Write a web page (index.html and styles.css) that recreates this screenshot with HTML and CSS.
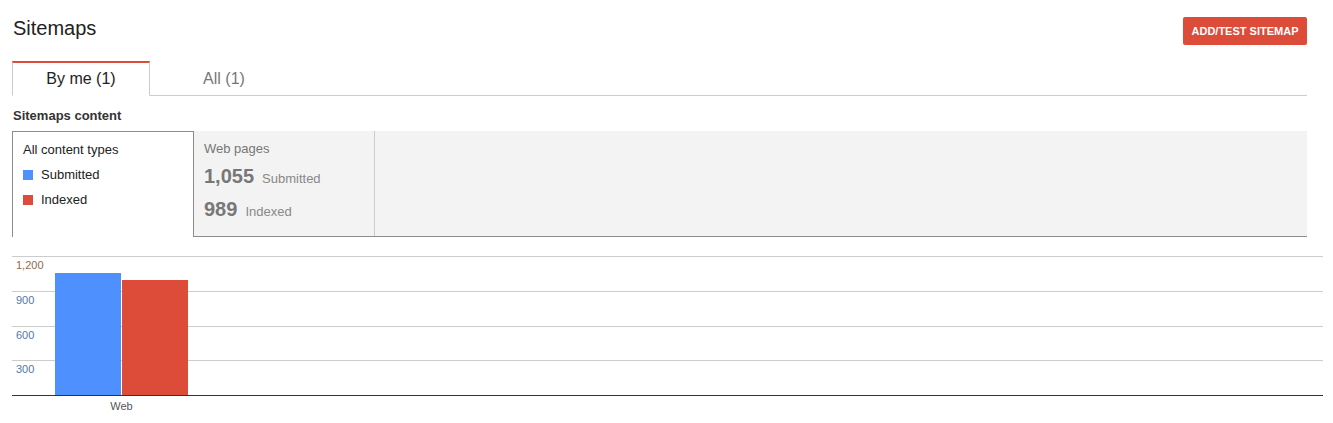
FILE: index.html
```html
<!DOCTYPE html>
<html>
<head>
    <title>Sitemaps</title>
    <link rel="stylesheet" href="styles.css">
</head>
<body>
    <div class="page">
        <div class="header">
            <div class="main-title">Sitemaps</div>
            <button class="add-sitemap">ADD/TEST SITEMAP</button>
        </div>

        <div class="tabs">
            <div class="tab active">By me (1)</div>
            <div class="tab tab-wide">All (1)</div>
        </div>

        <h2 class="section-title">Sitemaps content</h2>
        <div class="content-box">
            <div class="type-list">
                <div class="type-row">All content types</div>
                <div class="type-row"><span class="swatch submitted"></span>Submitted</div>
                <div class="type-row"><span class="swatch indexed"></span>Indexed</div>
            </div>
            <div class="type-details">
                <div class="detail-cell">
                    <div class="detail-title">Web pages</div>
                    <div class="detail-row"><span class="detail-num">1,055</span><span class="detail-label">Submitted</span></div>
                    <div class="detail-row"><span class="detail-num">989</span><span class="detail-label">Indexed</span></div>
                </div>
            </div>
        </div>

        <div class="chart">
            <div class="plot">
                <div class="grid-lines">
                    <div class="band"><span class="tick tick-top">1,200</span></div>
                    <div class="band"><span class="tick">900</span></div>
                    <div class="band"><span class="tick">600</span></div>
                    <div class="band"><span class="tick">300</span></div>
                </div>
                <div class="bars">
                    <div class="bar-group">
                        <div class="bar submitted" style="height: 87.9%"></div>
                        <div class="bar indexed" style="height: 82.4%"></div>
                    </div>
                </div>
            </div>
            <div class="x-axis">
                <div class="x-label">Web</div>
            </div>
        </div>
    </div>
</body>
</html>
```

FILE: styles.css
```css
body {
    font-family: "Liberation Sans", Arial, sans-serif;
    background-color: #fff;
    margin: 0;
    padding: 0;
    color: #222;
}
.page {
    padding: 0 26px 0 12px;
}
.header {
    display: flex;
    justify-content: space-between;
    align-items: flex-start;
    padding-top: 16px;
}
.main-title {
    font-size: 20px;
    line-height: 24px;
    color: #222;
    padding-left: 1px;
}
.add-sitemap {
    margin-top: 1px;
    width: 124px;
    height: 28px;
    background-color: #dd4b39;
    color: white;
    border: none;
    border-radius: 2px;
    font-family: inherit;
    font-size: 11px;
    font-weight: bold;
    padding: 0;
    cursor: pointer;
}
.tabs {
    display: flex;
    margin-top: 16px;
    height: 34px;
    border-bottom: 1px solid #ccc;
}
.tab {
    box-sizing: border-box;
    width: 138px;
    height: 35px;
    border: 1px solid transparent;
    border-top: 2px solid transparent;
    text-align: center;
    font-size: 16px;
    line-height: 32px;
    color: #777;
}
.tab-wide {
    width: 148px;
}
.tab.active {
    border-color: #ccc;
    border-top-color: #dd4b39;
    border-bottom-color: #fff;
    background-color: #fff;
    color: #222;
}
.section-title {
    font-size: 13px;
    line-height: 16px;
    font-weight: bold;
    color: #333;
    margin: 12px 0 7px 1px;
}
.content-box {
    display: flex;
    height: 106px;
}
.type-list {
    box-sizing: border-box;
    width: 182px;
    border: 1px solid #8c8c8c;
    border-bottom: none;
    padding: 5px 10px;
    font-size: 13px;
}
.type-row {
    display: flex;
    align-items: center;
    line-height: 25px;
}
.swatch {
    width: 10px;
    height: 10px;
    margin-right: 8px;
}
.submitted {
    background-color: #4d90fe;
}
.indexed {
    background-color: #dd4b39;
}
.type-details {
    flex: 1;
    display: flex;
    background-color: #f3f3f3;
    border-bottom: 1px solid #8c8c8c;
}
.detail-cell {
    box-sizing: border-box;
    width: 181px;
    border-right: 1px solid #ccc;
    padding: 6px 10px 5px;
}
.detail-title {
    font-size: 13px;
    line-height: 23px;
    color: #777;
}
.detail-row {
    line-height: 33px;
    height: 33px;
}
.detail-num {
    font-size: 20px;
    font-weight: bold;
    color: #777;
    margin-right: 8px;
}
.detail-label {
    font-size: 13px;
    color: #888;
}
.chart {
    margin: 19px -16px 0 0;
}
.plot {
    display: grid;
    height: 139px;
    border-bottom: 1px solid #333;
}
.grid-lines,
.bars {
    grid-area: 1 / 1;
}
.grid-lines {
    display: flex;
    flex-direction: column;
}
.band {
    flex: 1;
    border-top: 1px solid #ccc;
    padding: 2px 0 0 4px;
}
.tick {
    display: block;
    font-size: 11px;
    line-height: 13px;
    color: #55779f;
}
.tick-top {
    color: #8f6a4c;
}
.bars {
    display: flex;
    align-items: flex-end;
    padding-left: 43px;
}
.bar-group {
    display: flex;
    align-items: flex-end;
    gap: 1px;
    width: 133px;
    height: 100%;
}
.bar {
    width: 66px;
}
.x-axis {
    padding-left: 43px;
    margin-top: 4px;
}
.x-label {
    width: 133px;
    text-align: center;
    font-size: 11px;
    line-height: 13px;
    color: #555;
}
```
